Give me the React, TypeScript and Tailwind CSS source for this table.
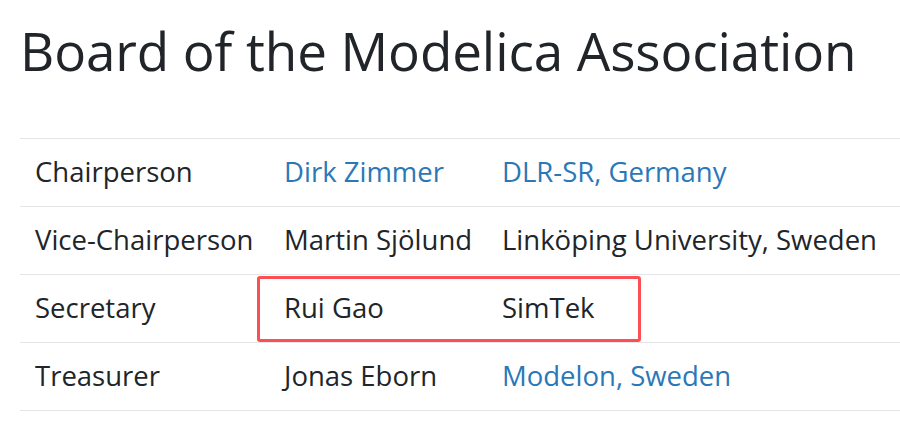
import React from "react";

const rows = [
  { role: "Chairperson", name: "Dirk Zimmer", nameLink: true, org: "DLR-SR, Germany", orgLink: true },
  { role: "Vice-Chairperson", name: "Martin Sjölund", nameLink: false, org: "Linköping University, Sweden", orgLink: false },
  { role: "Secretary", name: "Rui Gao", nameLink: false, org: "SimTek", orgLink: false, mark: true },
  { role: "Treasurer", name: "Jonas Eborn", nameLink: false, org: "Modelon, Sweden", orgLink: true },
];

export default function App() {
  return (
    <div
      className="w-[900px] h-[427px] bg-white overflow-hidden pl-[20px] text-[#212529]"
      style={{ fontFamily: '"Open Sans", "Noto Sans", sans-serif' }}
    >
      <h1 className="pt-[13px] text-[53px] leading-[76px] font-normal tracking-[-0.1px]">
        Board of the Modelica Association
      </h1>
      <div className="mt-[49px] border-b border-[#e3e5e8]">
        {rows.map((r) => (
          <div
            key={r.role}
            className="relative grid grid-cols-[249px_218px_1fr] h-[68px] items-center border-t border-[#e3e5e8] text-[27.5px] pb-[1px]"
          >
            <div className="pl-[15px] whitespace-nowrap">{r.role}</div>
            <div className={r.nameLink ? "pl-[15px] whitespace-nowrap text-[#2a78b8]" : "pl-[15px] whitespace-nowrap"}>{r.name}</div>
            <div className={r.orgLink ? "pl-[15px] whitespace-nowrap text-[#2a78b8]" : "pl-[15px] whitespace-nowrap"}>{r.org}</div>
            {r.mark && (
              <div className="absolute left-[237px] top-[1px] w-[384px] h-[66px] border-[3px] border-[#fb4f54] rounded-[3px]" />
            )}
          </div>
        ))}
      </div>
    </div>
  );
}
